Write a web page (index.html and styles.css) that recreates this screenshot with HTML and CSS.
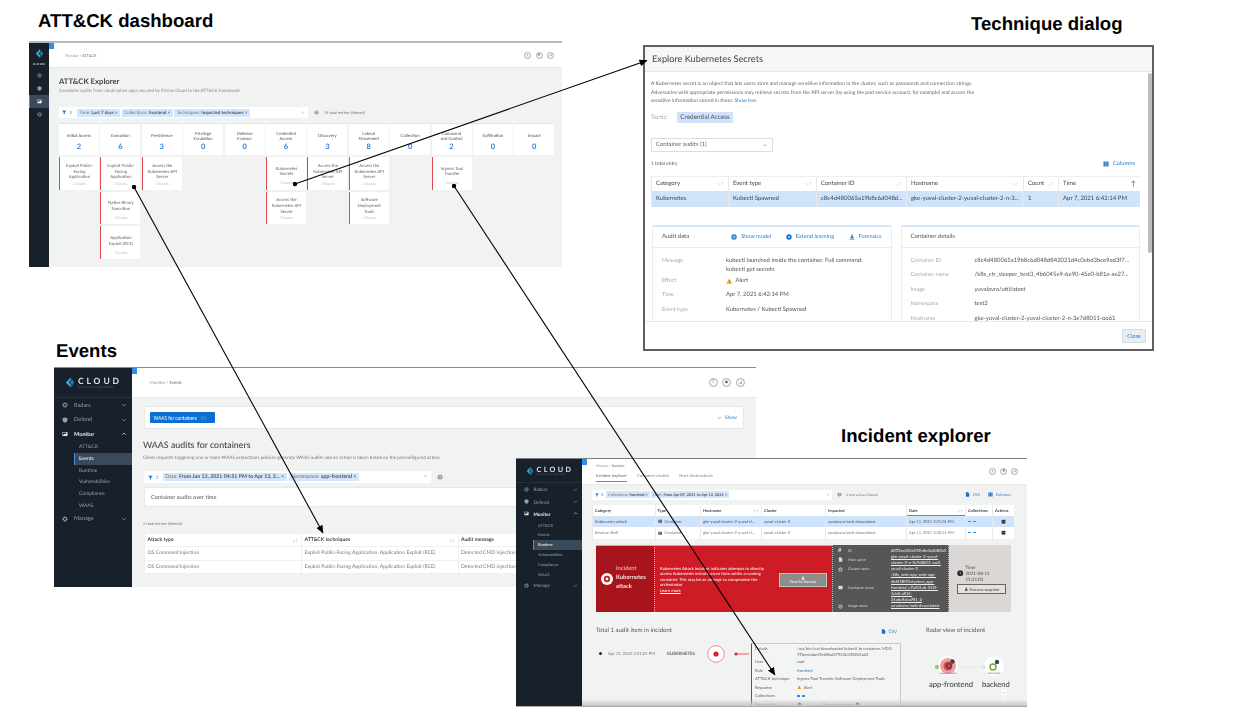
FILE: index.html
```html
<!DOCTYPE html>
<html lang="en">
<head>
  <meta charset="UTF-8" />
  <title>ATT&amp;CK explorer overview</title>
  <link rel="stylesheet" href="styles.css">
</head>
<body>

  <!-- icon set -->
  <svg class="icon-defs" aria-hidden="true">
    <symbol id="i-logo" viewBox="0 0 16 16"><path fill="#37b3d8" d="M9 0 1.5 8 9 16v-4.5L5.800 8 9 4.500z"/><path fill="#1f7fb0" d="M10 6 6.500 9.500H10V16l4.500-8L10 1z"/></symbol>
    <symbol id="i-radar" viewBox="0 0 12 12"><circle cx="6" cy="6" r="4" fill="none" stroke="currentColor" stroke-width="2"/><circle cx="6" cy="6" r="1.200" fill="currentColor"/></symbol>
    <symbol id="i-shield" viewBox="0 0 12 12"><path fill="currentColor" d="M6 .8l4.800 1.600v3.700c0 2.900-2.100 4.700-4.800 5.400-2.700-.7-4.800-2.500-4.800-5.400V2.400z"/></symbol>
    <symbol id="i-monitor" viewBox="0 0 12 12"><path fill="currentColor" d="M1 2h10v8H1zm2 5.500l2-2 1.500 1L9 4.200V3H2v4.500z"/></symbol>
    <symbol id="i-gear" viewBox="0 0 12 12"><circle cx="6" cy="6" r="3.200" fill="none" stroke="currentColor" stroke-width="2"/><circle cx="6" cy="6" r="4.800" fill="none" stroke="currentColor" stroke-width="1.400" stroke-dasharray="2 1.770"/></symbol>
    <symbol id="i-down" viewBox="0 0 12 12"><path fill="none" stroke="currentColor" stroke-width="1.400" d="M2.500 4.500 6 8l3.500-3.500"/></symbol>
    <symbol id="i-up" viewBox="0 0 12 12"><path fill="none" stroke="currentColor" stroke-width="1.400" d="M2.500 7.500 6 4l3.500 3.500"/></symbol>
    <symbol id="i-filter" viewBox="0 0 12 12"><path fill="currentColor" d="M.5 1.500h11L7.500 6.500V10l-3 1.500v-5z"/></symbol>
    <symbol id="i-help" viewBox="0 0 12 12"><circle cx="6" cy="6" r="5" fill="currentColor"/><path fill="none" stroke="#fff" stroke-width="1.200" d="M4.500 4.800C4.500 3 7.500 3 7.500 4.800 7.500 6 6 6 6 7.300M6 8.200v1"/></symbol>
    <symbol id="i-bell" viewBox="0 0 12 12"><path fill="currentColor" d="M6 1.500c2 0 2.800 1.500 2.800 3.500l1 2.500H2.200l1-2.500C3.200 3 4 1.500 6 1.500zM5 8.500h2v1H5z"/></symbol>
    <symbol id="i-bars" viewBox="0 0 12 12"><path fill="currentColor" d="M2 8h1.500v1.500H2zM5 6h1.500v3.500H5zM8 3h1.500v6.500H8z"/></symbol>
    <symbol id="i-columns" viewBox="0 0 12 12"><path fill="currentColor" d="M1 1h2.800v10H1zM4.600 1h2.800v10H4.600zM8.200 1H11v10H8.200z"/></symbol>
    <symbol id="i-csv" viewBox="0 0 12 12"><path fill="currentColor" d="M2 .5h5l3 3v8H2zM7 6h3.500v3H7z"/></symbol>
    <symbol id="i-model" viewBox="0 0 12 12"><circle cx="6" cy="6" r="5.400" fill="currentColor"/><circle cx="6" cy="6" r="2.400" fill="none" stroke="#fff" stroke-width="1.100"/></symbol>
    <symbol id="i-learn" viewBox="0 0 12 12"><circle cx="6" cy="6" r="5.400" fill="currentColor"/><path fill="none" stroke="#fff" stroke-width="1.100" d="M3.400 6h4.200M6 4l2 2-2 2"/></symbol>
    <symbol id="i-forensic" viewBox="0 0 12 12"><path fill="currentColor" d="M1 9.800h10V11H1zM5 1h2.500v4.500l1.500.5v3H3V6l2-.5z"/></symbol>
    <symbol id="i-warn" viewBox="0 0 12 12"><path fill="#f3b21b" d="M6 1l5.500 9.800H.5z"/><path fill="#5b4a12" d="M5.500 4.500h1v3.500h-1zM5.500 8.700h1v1h-1z"/></symbol>
    <symbol id="i-ring" viewBox="0 0 12 12"><circle cx="6" cy="6" r="6" fill="#fff"/><circle cx="6" cy="6" r="3.200" fill="#c3181f"/><circle cx="6" cy="6" r="1.400" fill="#fff"/></symbol>
    <symbol id="i-clock" viewBox="0 0 12 12"><circle cx="6" cy="6" r="5.500" fill="#2b2b2b"/><path fill="none" stroke="#ddd" stroke-width="1" d="M6 3v3.300l2 1.200"/></symbol>
    <symbol id="i-box" viewBox="0 0 12 12"><path fill="currentColor" d="M1 2h10v8H1z"/><path fill="#fff" opacity=".6" d="M2.500 4h7v1h-7zM2.500 6.500h7v1h-7z"/></symbol>
    <symbol id="i-trash" viewBox="0 0 12 12"><path fill="currentColor" d="M1.500 2h9v9h-9z"/><path fill="#888" d="M3 5h6v1H3z"/></symbol>
    <symbol id="i-robot" viewBox="0 0 12 12"><path fill="#444" d="M6 1a4.500 4.500 0 0 1 4.500 4.500V8h-9V5.500A4.500 4.500 0 0 1 6 1zM2.500 9h7v2h-7z"/></symbol>
  </svg>

  <h2 class="caption caption-dash">ATT&amp;CK dashboard</h2>
  <h2 class="caption caption-dialog">Technique dialog</h2>
  <h2 class="caption caption-events">Events</h2>
  <h2 class="caption caption-incident">Incident explorer</h2>

  <!-- ATT&CK dashboard -->
  <section class="shot shot-dash">
    <aside class="sidebar side-dash">
      <div class="brand">
        <svg class="brand-logo"><use href="#i-logo"/></svg>
        <span class="brand-name">CLOUD</span>
      </div>
      <ul class="nav">
        <li class="nav-item"><svg class="nav-icon"><use href="#i-radar"/></svg></li>
        <li class="nav-item"><svg class="nav-icon"><use href="#i-shield"/></svg></li>
        <li class="nav-item is-active"><svg class="nav-icon"><use href="#i-monitor"/></svg></li>
        <li class="nav-item"><svg class="nav-icon"><use href="#i-gear"/></svg></li>
      </ul>
    </aside>
    <div class="main">
      <span class="collapse-tab"></span>
      <header class="topbar">
        <div class="crumb">Monitor / <b>ATT&amp;CK</b></div>
        <div class="top-icons">
          <span class="round">?</span>
          <span class="round"><svg><use href="#i-bell"/></svg></span>
          <span class="round"><svg><use href="#i-bars"/></svg></span>
        </div>
      </header>
      <div class="dash-body">
        <h1 class="dash-title">ATT&amp;CK Explorer</h1>
        <p class="dash-sub">Correlates audits from cloud native apps secured by Prisma Cloud to the ATT&amp;CK framework</p>
        <div class="filter-row">
          <div class="filter-bar">
            <svg class="filter-icon"><use href="#i-filter"/></svg><span class="filter-count">3</span>
            <span class="chip">Time: <b>Last 7 days</b> <i>×</i></span>
            <span class="chip">Collections: <b>frontend</b> <i>×</i></span>
            <span class="chip">Techniques: <b>Impacted techniques</b> <i>×</i></span>
            <span class="filter-clear">×</span>
          </div>
          <svg class="help-icon"><use href="#i-help"/></svg>
          <span class="entries">19 total entries (filtered)</span>
        </div>
        <div class="matrix">
          <div class="tactic">
            <div class="tactic-head"><span>Initial Access</span><b>2</b></div>
            <div class="tech"><span>Exploit Public-<br>Facing<br>Application</span><small>2 Events</small></div>
          </div>
          <div class="tactic">
            <div class="tactic-head"><span>Execution</span><b>6</b></div>
            <div class="tech"><span>Exploit Public-<br>Facing<br>Application</span><small>2 Events</small></div>
            <div class="tech"><span>Native Binary<br>Execution</span><small>2 Events</small></div>
            <div class="tech"><span>Application<br>Exploit (RCE)</span><small>2 Events</small></div>
          </div>
          <div class="tactic">
            <div class="tactic-head"><span>Persistence</span><b>3</b></div>
            <div class="tech"><span>Access the<br>Kubernetes API<br>Server</span><small>3 Events</small></div>
          </div>
          <div class="tactic">
            <div class="tactic-head"><span>Privilege<br>Escalation</span><b>0</b></div>
          </div>
          <div class="tactic">
            <div class="tactic-head"><span>Defense<br>Evasion</span><b>0</b></div>
          </div>
          <div class="tactic">
            <div class="tactic-head"><span>Credential<br>Access</span><b>6</b></div>
            <div class="tech"><span>Kubernetes<br>Secrets</span><small>3 Events</small></div>
            <div class="tech"><span>Access the<br>Kubernetes API<br>Server</span><small>3 Events</small></div>
          </div>
          <div class="tactic">
            <div class="tactic-head"><span>Discovery</span><b>3</b></div>
            <div class="tech"><span>Access the<br>Kubernetes API<br>Server</span><small>3 Events</small></div>
          </div>
          <div class="tactic">
            <div class="tactic-head"><span>Lateral<br>Movement</span><b>8</b></div>
            <div class="tech"><span>Access the<br>Kubernetes API<br>Server</span><small>3 Events</small></div>
            <div class="tech"><span>Software<br>Deployment<br>Tools</span><small>5 Events</small></div>
          </div>
          <div class="tactic">
            <div class="tactic-head"><span>Collection</span><b>0</b></div>
          </div>
          <div class="tactic">
            <div class="tactic-head"><span>Command<br>and Control</span><b>2</b></div>
            <div class="tech"><span>Ingress Tool<br>Transfer</span><small>2 Events</small></div>
          </div>
          <div class="tactic">
            <div class="tactic-head"><span>Exfiltration</span><b>0</b></div>
          </div>
          <div class="tactic">
            <div class="tactic-head"><span>Impact</span><b>0</b></div>
          </div>
        </div>
      </div>
    </div>
  </section>

  <!-- technique dialog -->
  <section class="shot-dialog">
    <header class="dialog-head">Explore Kubernetes Secrets</header>
    <div class="dialog-body">
      <p class="dialog-text">A Kubernetes secret is an object that lets users store and manage sensitive information in the cluster, such as passwords and connection strings.<br>
        Adversaries with appropriate permissions may retrieve secrets from the API server (by using the pod service account, for example) and access the<br>
        sensitive information stored in them. <a>Show less</a></p>
      <div class="tactic-row"><span>Tactic:</span><b>Credential Access</b></div>
      <div class="select">Container audits (1)<svg><use href="#i-down"/></svg></div>
      <div class="total-row">
        <span>1 total entry</span>
        <a class="link-columns"><svg><use href="#i-columns"/></svg>Columns</a>
      </div>
      <div class="dialog-table">
        <div class="d-row d-head">
          <span>Category<em>↓↑</em></span><span>Event type<em>↓↑</em></span><span>Container ID<em>↓↑</em></span><span>Hostname<em>↓↑</em></span><span>Count<em>↓↑</em></span><span>Time<em class="sorted">↑</em></span>
        </div>
        <div class="d-row d-selected">
          <span>Kubernetes</span><span>Kubectl Spawned</span><span>c8c4d480065a19b8c6d048d...</span><span>gke-yuval-cluster-2-yuval-cluster-2-n-3...</span><span>1</span><span>Apr 7, 2021 6:42:14 PM</span>
        </div>
      </div>
      <div class="detail-cards">
        <article class="card">
          <header class="card-head">
            <span class="card-title">Audit data</span>
            <a class="card-link link-model"><svg><use href="#i-model"/></svg>Show model</a>
            <a class="card-link"><svg><use href="#i-learn"/></svg>Extend learning</a>
            <a class="card-link"><svg><use href="#i-forensic"/></svg>Forensics</a>
          </header>
          <dl class="facts facts-audit">
            <dt>Message</dt><dd class="tall">kubectl launched inside the container. Full command:<br>kubectl get secrets</dd>
            <dt>Effect</dt><dd><svg class="warn"><use href="#i-warn"/></svg>Alert</dd>
            <dt>Time</dt><dd>Apr 7, 2021 6:42:14 PM</dd>
            <dt>Event type</dt><dd>Kubernetes / Kubectl Spawned</dd>
          </dl>
        </article>
        <article class="card">
          <header class="card-head"><span class="card-title">Container details</span></header>
          <dl class="facts facts-container">
            <dt>Container ID</dt><dd>c8c4d480065a19b8c6d048d842021d4c0ebd3bce9ed3f7...</dd>
            <dt>Container name</dt><dd>/k8s_ctr_sleeper_test3_4b6045e9-6e90-45e0-b81a-ae27...</dd>
            <dt>Image</dt><dd>yuvalavra/util:latest</dd>
            <dt>Namespace</dt><dd>test3</dd>
            <dt>Hostname</dt><dd>gke-yuval-cluster-2-yuval-cluster-2-n-3e7d8051-oo61</dd>
          </dl>
        </article>
      </div>
      <div class="scrollbar"></div>
    </div>
    <footer class="dialog-foot"><button class="close-btn">Close</button></footer>
  </section>

  <!-- events -->
  <section class="shot shot-events">
    <aside class="sidebar side-events">
      <div class="brand">
        <svg class="brand-logo"><use href="#i-logo"/></svg>
        <div><span class="brand-name">CLOUD</span><small class="brand-by">BY PALO ALTO NETWORKS</small></div>
      </div>
      <ul class="nav">
        <li class="nav-item"><svg class="nav-icon"><use href="#i-radar"/></svg>Radars<svg class="nav-arrow"><use href="#i-down"/></svg></li>
        <li class="nav-item"><svg class="nav-icon"><use href="#i-shield"/></svg>Defend<svg class="nav-arrow"><use href="#i-down"/></svg></li>
        <li class="nav-item is-open"><svg class="nav-icon"><use href="#i-monitor"/></svg>Monitor<svg class="nav-arrow"><use href="#i-up"/></svg></li>
        <li class="nav-sub">ATT&amp;CK</li>
        <li class="nav-sub is-active">Events</li>
        <li class="nav-sub">Runtime</li>
        <li class="nav-sub">Vulnerabilities</li>
        <li class="nav-sub">Compliance</li>
        <li class="nav-sub">WAAS</li>
        <li class="nav-item"><svg class="nav-icon"><use href="#i-gear"/></svg>Manage<svg class="nav-arrow"><use href="#i-down"/></svg></li>
      </ul>
    </aside>
    <div class="main">
      <span class="collapse-tab"></span>
      <header class="topbar">
        <div class="crumb">Monitor / <b>Events</b></div>
        <div class="top-icons">
          <span class="round">?</span>
          <span class="round"><svg><use href="#i-bell"/></svg></span>
          <span class="round"><svg><use href="#i-bars"/></svg></span>
        </div>
      </header>
      <div class="events-body">
        <div class="waas-box">
          <button class="waas-btn">WAAS for containers<em>(0)</em></button>
          <a class="show-link"><svg><use href="#i-down"/></svg>Show</a>
        </div>
        <h1 class="events-title">WAAS audits for containers</h1>
        <p class="events-sub">Client requests triggering one or more WAAS protections policies generate WAAS audits and an action is taken based on the preconfigured action.</p>
        <div class="filter-row">
          <div class="filter-bar">
            <svg class="filter-icon"><use href="#i-filter"/></svg><span class="filter-count">2</span>
            <span class="chip">Date: <b>From Jan 13, 2021 04:51 PM to Apr 13, 2...</b> <i>×</i></span>
            <span class="chip">Namespace: <b>app-frontend</b> <i>×</i></span>
            <span class="filter-clear">×</span>
          </div>
          <svg class="help-icon"><use href="#i-help"/></svg>
        </div>
        <div class="chart-box">Container audits over time</div>
        <div class="entries">2 total entries (filtered)</div>
        <div class="events-table">
          <div class="e-row e-head"><span>Attack type<em>↓↑</em></span><span>ATT&amp;CK techniques<em>↓↑</em></span><span>Audit message</span></div>
          <div class="e-row"><span>OS Command Injection</span><span>Exploit Public-Facing Application, Application Exploit (RCE)</span><span>Detected CMD injection</span></div>
          <div class="e-row"><span>OS Command Injection</span><span>Exploit Public-Facing Application, Application Exploit (RCE)</span><span>Detected CMD injection</span></div>
        </div>
      </div>
    </div>
  </section>

  <!-- incident explorer -->
  <section class="shot shot-incident">
    <aside class="sidebar side-incident">
      <div class="brand">
        <svg class="brand-logo"><use href="#i-logo"/></svg>
        <div><span class="brand-name">CLOUD</span><small class="brand-by">BY PALO ALTO NETWORKS</small></div>
      </div>
      <ul class="nav">
        <li class="nav-item"><svg class="nav-icon"><use href="#i-radar"/></svg>Radars<svg class="nav-arrow"><use href="#i-down"/></svg></li>
        <li class="nav-item"><svg class="nav-icon"><use href="#i-shield"/></svg>Defend<svg class="nav-arrow"><use href="#i-down"/></svg></li>
        <li class="nav-item is-open"><svg class="nav-icon"><use href="#i-monitor"/></svg>Monitor<svg class="nav-arrow"><use href="#i-up"/></svg></li>
        <li class="nav-sub">ATT&amp;CK</li>
        <li class="nav-sub">Events</li>
        <li class="nav-sub is-active">Runtime</li>
        <li class="nav-sub">Vulnerabilities</li>
        <li class="nav-sub">Compliance</li>
        <li class="nav-sub">WAAS</li>
        <li class="nav-item"><svg class="nav-icon"><use href="#i-gear"/></svg>Manage<svg class="nav-arrow"><use href="#i-down"/></svg></li>
      </ul>
    </aside>
    <div class="main">
      <span class="collapse-tab"></span>
      <header class="topbar">
        <div>
          <div class="crumb">Monitor / <b>Runtime</b></div>
          <nav class="tabs">
            <span class="tab is-current">Incident explorer</span>
            <span class="tab">Container models</span>
            <span class="tab">Host observations</span>
          </nav>
        </div>
        <div class="top-icons">
          <span class="round">?</span>
          <span class="round"><svg><use href="#i-bell"/></svg></span>
          <span class="round"><svg><use href="#i-bars"/></svg></span>
        </div>
      </header>
      <div class="incident-body">
        <div class="filter-row">
          <div class="filter-bar">
            <svg class="filter-icon"><use href="#i-filter"/></svg><span class="filter-count">2</span>
            <span class="chip">Collections: <b>frontend</b> <i>×</i></span>
            <span class="chip">Date: <b>From Apr 09, 2021 to Apr 12, 2021</b> <i>×</i></span>
            <span class="filter-clear">×</span>
          </div>
          <svg class="help-icon"><use href="#i-help"/></svg>
          <span class="entries">2 total entries (filtered)</span>
          <a class="link-csv"><svg><use href="#i-csv"/></svg>CSV</a>
          <a class="link-columns"><svg><use href="#i-columns"/></svg>Columns</a>
        </div>
        <div class="incident-table">
          <div class="i-row i-head">
            <span>Category</span><span>Type</span><span>Hostname<em>↓↑</em></span><span>Cluster</span><span>Impacted</span><span class="i-sorted">Date<em>↓↑</em></span><span>Collections</span><span>Actions</span>
          </div>
          <div class="i-row i-selected">
            <span>Kubernetes attack</span><span><svg class="i-type"><use href="#i-box"/></svg>Container</span><span>gke-yuval-cluster-2-yuval-cl...</span><span>yuval-cluster-2</span><span>yuvalavra/web-dvwa:latest</span><span>Apr 11, 2021 3:31:01 PM</span><span class="dashes"><i></i><i></i></span><span><svg class="i-action"><use href="#i-trash"/></svg></span>
          </div>
          <div class="i-row">
            <span>Reverse Shell</span><span><svg class="i-type"><use href="#i-box"/></svg>Container</span><span>gke-yuval-cluster-2-yuval-cl...</span><span>yuval-cluster-2</span><span>yuvalavra/web-dvwa:latest</span><span>Apr 11, 2021 3:30:51 PM</span><span class="dashes"><i></i><i></i></span><span><svg class="i-action"><use href="#i-trash"/></svg></span>
          </div>
        </div>

        <div class="red-panel">
          <div class="red-name">
            <svg><use href="#i-ring"/></svg>
            <div>Incident<br><b>Kubernetes<br>attack</b></div>
          </div>
          <div class="red-info">
            <p>Kubernetes Attack incident indicates attempts to directly<br>access Kubernetes infrastructure from within a running<br>container. This may be an attempt to compromise the<br>orchestrator<br><u>Learn more</u></p>
            <button class="forensic-btn"><svg><use href="#i-forensic"/></svg>View live forensic</button>
          </div>
          <div class="red-facts">
            <div class="rf-row"><span class="rf-key"><b>#</b>ID</span><span class="rf-val">d872ec050e539c8e4e0082b3</span></div>
            <div class="rf-row"><span class="rf-key"><svg><use href="#i-csv"/></svg>Host name</span><span class="rf-val"><u>gke-yuval-cluster-2-yuval-<br>cluster-2-n-3e7d8051-sxd1</u></span></div>
            <div class="rf-row"><span class="rf-key"><svg><use href="#i-gear"/></svg>Cluster name</span><span class="rf-val">yuval-cluster-2</span></div>
            <div class="rf-row"><span class="rf-key"><svg><use href="#i-box"/></svg>Container name</span><span class="rf-val"><u>/k8s_web-app_web-app-<br>6bf458f55d-pdvrx_app-<br>frontend_c7a401ab-542f-<br>4cb8-a814-<br>24abc8cba781_0</u></span></div>
            <div class="rf-row"><span class="rf-key"><svg><use href="#i-radar"/></svg>Image name</span><span class="rf-val"><u>yuvalavra/web-dvwa:latest</u></span></div>
          </div>
          <div class="red-time">
            <div class="time-line"><svg><use href="#i-clock"/></svg><div>Time<br>2021-04-11<br>15:31:01</div></div>
            <button class="snapshot-btn"><svg><use href="#i-forensic"/></svg>Forensic snapshot</button>
          </div>
        </div>

        <div class="audit-area">
          <div class="audit-left">
            <div class="audit-heading">
              <h3>Total 1 audit item in incident</h3>
              <a class="link-csv"><svg><use href="#i-csv"/></svg>CSV</a>
            </div>
            <div class="audit-item">
              <div class="audit-when">
                <i class="black-dot"></i>
                <span class="when-date">Apr 11, 2021 3:31:01 PM</span>
                <span class="when-kind">KUBERNETES</span>
                <svg class="when-ring" viewBox="0 0 42 22">
                  <circle cx="9" cy="11" r="8.300" fill="#fff" stroke="#ef8d90" stroke-width="1"/>
                  <circle cx="9" cy="11" r="2.600" fill="#d8202b"/>
                  <circle cx="29" cy="11" r="1.500" fill="#d8202b"/>
                  <path d="M29 11h13" stroke="#d8202b" stroke-width=".7"/>
                </svg>
              </div>
              <div class="audit-box">
                <span class="first">Details</span><p class="first">/usr/bin/curl downloaded kubectl to container. MD5:<br>77beedabe49c08bd479240438203a04</p>
                <span>User</span><p>root</p>
                <span>Rule</span><p class="blue">frontend</p>
                <span>ATT&amp;CK technique</span><p>Ingress Tool Transfer, Software Deployment Tools</p>
                <span>Response</span><p><svg class="warn"><use href="#i-warn"/></svg>Alert</p>
                <span>Collections</span><p class="dashes"><i></i><i></i></p>
                <span>Show model</span><p class="model-row"><svg><use href="#i-robot"/></svg><em>Extend Learning</em><svg><use href="#i-robot"/></svg></p>
              </div>
            </div>
          </div>
          <div class="radar">
            <h3>Radar view of incident</h3>
            <div class="radar-map">
              <svg class="radar-svg" viewBox="0 0 88 58">
                <path d="M14 27h48" stroke="#ddd" stroke-width=".6"/>
                <circle cx="22" cy="26" r="10" fill="#fff"/>
                <circle cx="22" cy="26" r="8" fill="#f0a0a0"/>
                <circle cx="22" cy="26" r="4.500" fill="#d6454b"/>
                <circle cx="23" cy="26" r="2.400" fill="none" stroke="#333" stroke-width="1"/>
                <circle cx="26.500" cy="21.500" r="2.200" fill="#444"/>
                <circle cx="11" cy="27" r="2.200" fill="#9ccc65"/>
                <circle cx="68" cy="26" r="10" fill="#fff"/>
                <circle cx="67" cy="27" r="3" fill="none" stroke="#6aa62f" stroke-width="1.400"/>
                <circle cx="71" cy="22" r="2.200" fill="#444"/>
                <circle cx="58" cy="27" r="1.800" fill="#ddd"/>
                <text class="radar-tiny" x="22" y="33.500">web-dvwa:latest</text>
                <text class="radar-tiny" x="68" y="33.500">be-frontend</text>
              </svg>
              <span class="radar-name name-front">app-frontend</span>
              <span class="radar-name name-back">backend</span>
              <span class="zoom-btn zoom-in">+</span>
              <span class="zoom-btn zoom-out">−</span>
            </div>
          </div>
        </div>
      </div>
    </div>
  </section>

  <!-- arrows between the pictures -->
  <svg class="arrows" viewBox="0 0 1259 710">
    <defs>
      <marker id="arrow-head" markerUnits="userSpaceOnUse" markerWidth="8" markerHeight="7" refX="7.500" refY="3.500" orient="auto">
        <path d="M0 0 8 3.500 0 7z"/>
      </marker>
      <marker id="start-dot" markerUnits="userSpaceOnUse" markerWidth="5" markerHeight="5" refX="2.500" refY="2.500">
        <circle cx="2.500" cy="2.500" r="2.200"/>
      </marker>
    </defs>
    <path class="arrow" d="M295 184 647 60.500"/>
    <path class="arrow" d="M134 187 323 533"/>
    <path class="arrow" d="M454 186 775 675"/>
  </svg>

</body>
</html>
```

FILE: styles.css
```css
* {
  box-sizing: border-box;
}

html, body {
  margin: 0;
  padding: 0;
}

body {
  position: relative;
  width: 1259px;
  height: 710px;
  overflow: hidden;
  background: #fff;
  font-family: Lato, "Liberation Sans", sans-serif;
  color: #555;
  text-rendering: geometricPrecision;
}

h1, h2, h3, p, dl, dd, ul {
  margin: 0;
  padding: 0;
}

ul {
  list-style: none;
}

button {
  font-family: inherit;
  border: none;
  padding: 0;
}

em, i {
  font-style: normal;
}

.icon-defs {
  position: absolute;
  width: 0;
  height: 0;
}

/* headings over each picture */
.caption {
  position: absolute;
  font-family: "Liberation Sans", Arial, sans-serif;
  font-size: 18.600px;
  line-height: 22px;
  font-weight: bold;
  color: #000;
  white-space: nowrap;
}

.caption-dash { left: 38px; top: 10px; }
.caption-dialog { left: 971px; top: 13px; }
.caption-events { left: 56px; top: 340px; }
.caption-incident { left: 841px; top: 425px; }

/* the screenshot windows */
.shot {
  position: absolute;
  display: flex;
  overflow: hidden;
  background: #f1f3f3;
  filter: blur(.45px);
}

.shot-dash {
  left: 29px;
  top: 41px;
  width: 533px;
  height: 226px;
  border-top: 2px solid #b7b7b7;
}

.shot-events {
  left: 54px;
  top: 367px;
  width: 702px;
  height: 220px;
  border-top: 1px solid #8a8a8a;
}

.shot-incident {
  left: 516px;
  top: 458px;
  width: 511px;
  height: 248.500px;
  border-top: 1px solid #7d7d7d;
  border-bottom: 1px solid #a9a9a9;
}

.shot-incident::after {
  content: "";
  position: absolute;
  left: 66px;
  right: 0;
  bottom: 0;
  height: 7px;
  background: linear-gradient(to bottom, rgba(190, 190, 190, 0), #c4c4c4);
}

.main {
  position: relative;
  flex: 1;
  min-width: 0;
}

.collapse-tab {
  position: absolute;
  left: 0;
  top: 0;
  width: 5px;
  height: 6px;
  background: #2f8ee8;
}

/* sidebars */
.sidebar {
  flex: none;
  background: #17202b;
  color: #97a1ac;
}

.brand {
  display: flex;
  align-items: center;
  border-bottom: 1px solid #25303c;
}

.brand-name {
  display: block;
  color: #dfe4e8;
  font-weight: bold;
}

.brand-by {
  display: block;
  color: #5d6874;
  white-space: nowrap;
}

.nav-item, .nav-sub {
  display: flex;
  align-items: center;
  white-space: nowrap;
}

.nav-item.is-open {
  color: #e6e9ec;
  font-weight: bold;
}

.nav-sub.is-active, .nav-item.is-active {
  background: #3b4a5b;
  color: #fff;
  box-shadow: inset 1px 0 0 #3f93e6;
}

.nav-arrow {
  margin-left: auto;
}

.side-dash {
  width: 20px;
}

.side-dash .brand {
  flex-direction: column;
  height: 26px;
  padding-top: 5px;
  border: none;
}

.side-dash .brand-logo {
  width: 9px;
  height: 11px;
}

.side-dash .brand-name {
  font-size: 2.800px;
  letter-spacing: .5px;
  margin-top: 3px;
}

.side-dash .nav-item {
  height: 13px;
  justify-content: center;
}

.side-dash .nav-icon {
  width: 5px;
  height: 5px;
}

.side-events {
  width: 78px;
}

.side-events .brand {
  height: 30px;
  padding-left: 11px;
  gap: 3px;
}

.side-events .brand-logo {
  width: 10px;
  height: 13px;
}

.side-events .brand-name {
  font-size: 8.500px;
  line-height: 9px;
  letter-spacing: 2.900px;
}

.side-events .brand-by {
  font-size: 2.400px;
  letter-spacing: .3px;
}

.side-events .nav-item {
  height: 14.500px;
  padding: 0 5px 0 8px;
  font-size: 5.600px;
}

.side-events .nav-icon {
  width: 6px;
  height: 6px;
  margin-right: 6px;
}

.side-events .nav-arrow {
  width: 6px;
  height: 6px;
}

.side-events .nav-sub {
  height: 11.700px;
  padding-left: 25px;
  font-size: 5px;
}

.side-events .nav-sub.is-active {
  margin-left: 20px;
  padding-left: 5px;
}

.side-incident {
  width: 66px;
}

.side-incident .brand {
  height: 24px;
  padding-left: 10px;
  gap: 2.500px;
}

.side-incident .brand-logo {
  width: 8px;
  height: 10px;
}

.side-incident .brand-name {
  font-size: 7.200px;
  line-height: 8px;
  letter-spacing: 2.400px;
}

.side-incident .brand-by {
  font-size: 2px;
  letter-spacing: .2px;
}

.side-incident .nav-item {
  height: 12.400px;
  padding: 0 4px 0 8px;
  font-size: 4.700px;
}

.side-incident .nav-icon {
  width: 5px;
  height: 5px;
  margin-right: 4.500px;
}

.side-incident .nav-arrow {
  width: 5px;
  height: 5px;
}

.side-incident .nav-sub {
  height: 9.800px;
  padding-left: 22px;
  font-size: 4px;
}

.side-incident .nav-sub.is-active {
  margin-left: 17px;
  padding-left: 5px;
}

/* top bars */
.topbar {
  display: flex;
  justify-content: space-between;
  align-items: center;
  background: #fff;
  border-bottom: 1px solid #e9e9e9;
}

.crumb {
  color: #999;
}

.crumb b {
  color: #666;
  font-weight: normal;
}

.top-icons {
  display: flex;
}

.round {
  display: flex;
  align-items: center;
  justify-content: center;
  border: .5px solid #aaa;
  border-radius: 50%;
  background: #f7f7f7;
  color: #666;
}

.round svg {
  width: 70%;
  height: 70%;
}

.shot-dash .topbar {
  height: 25px;
  padding: 0 8px 0 16px;
}

.shot-dash .crumb {
  font-size: 3.800px;
}

.shot-dash .top-icons {
  gap: 4.500px;
}

.shot-dash .round {
  width: 7px;
  height: 7px;
  font-size: 4px;
}

.shot-events .topbar {
  height: 29.500px;
  padding: 0 11.500px 0 18px;
}

.shot-events .crumb {
  font-size: 4.300px;
}

.shot-events .top-icons {
  gap: 4.500px;
}

.shot-events .round {
  width: 9px;
  height: 9px;
  font-size: 5px;
}

.shot-incident .topbar {
  height: 26px;
  padding: 0 9px 0 14px;
  align-items: flex-start;
}

.shot-incident .crumb {
  font-size: 3.500px;
  line-height: 5px;
  margin-top: 5px;
}

.shot-incident .top-icons {
  gap: 4px;
  margin-top: 8.500px;
}

.shot-incident .round {
  width: 7px;
  height: 7px;
  font-size: 4px;
}

.tabs {
  display: flex;
  gap: 10px;
  margin-top: 3px;
}

.tab {
  height: 10px;
  font-size: 4.200px;
  line-height: 8px;
  color: #888;
}

.tab.is-current {
  color: #666;
  border-bottom: 1px solid #3f93e6;
}

/* filter bars */
.filter-row {
  display: flex;
  align-items: center;
}

.filter-bar {
  display: flex;
  align-items: center;
  background: #fff;
  white-space: nowrap;
}

.filter-icon {
  color: #1d7ad2;
  flex: none;
}

.filter-count {
  color: #1d7ad2;
}

.chip {
  background: #d4e6fb;
  color: #777;
  white-space: nowrap;
}

.chip b {
  color: #555;
}

.chip i {
  color: #1d6fcb;
  font-weight: bold;
}

.filter-clear {
  margin-left: auto;
  color: #aaa;
}

.help-icon {
  color: #9a9a9a;
  flex: none;
}

.entries {
  color: #777;
  white-space: nowrap;
}

/* dashboard */
.dash-body {
  padding: 8px 0 0 10px;
}

.dash-title {
  font-size: 7.700px;
  line-height: 10px;
  font-weight: bold;
  color: #444;
}

.dash-sub {
  font-size: 4.470px;
  line-height: 6px;
  margin-top: 2px;
  color: #888;
  white-space: nowrap;
}

.shot-dash .filter-row {
  margin-top: 13px;
}

.shot-dash .filter-bar {
  width: 249px;
  height: 11px;
  padding: 0 4px 0 3px;
  font-size: 4.550px;
}

.shot-dash .filter-icon {
  width: 4.500px;
  height: 4.500px;
}

.shot-dash .filter-count {
  margin: 0 5px 0 3px;
  font-size: 4px;
}

.shot-dash .chip {
  padding: 1.500px 2.500px;
  margin-right: 1.500px;
}

.shot-dash .help-icon {
  width: 5px;
  height: 5px;
  margin: 0 5px 0 6px;
}

.shot-dash .entries {
  font-size: 3.850px;
}

.matrix {
  display: flex;
  gap: 1.400px;
  margin-top: 5px;
}

.tactic {
  flex: none;
  width: 40px;
}

.tactic-head {
  display: flex;
  flex-direction: column;
  align-items: center;
  height: 32px;
  padding-top: 5px;
  background: #fff;
  border-top: 1px solid #d8e8fa;
  border-radius: 1px;
  margin-bottom: 2px;
  font-size: 4.300px;
  line-height: 5.300px;
  color: #555;
  text-align: center;
}

.tactic-head span {
  display: flex;
  align-items: center;
  height: 14px;
}

.tactic-head b {
  font-size: 7.500px;
  line-height: 10px;
  margin-top: -1px;
  color: #2d84dc;
}

.tech {
  display: flex;
  flex-direction: column;
  align-items: center;
  height: 32.700px;
  padding-top: 5.800px;
  margin-bottom: 2px;
  background: #fff;
  border-left: 1.300px solid #e04a4e;
  font-size: 4.300px;
  line-height: 5.700px;
  color: #666;
  text-align: center;
}

.tech span {
  display: flex;
  align-items: center;
  min-height: 17px;
}

.tech small {
  font-size: 3.400px;
  line-height: 5px;
  margin-top: 1.700px;
  color: #b5b5b5;
}

/* technique dialog */
.shot-dialog {
  position: absolute;
  left: 643px;
  top: 45px;
  width: 511px;
  height: 306px;
  display: flex;
  flex-direction: column;
  border: 2px solid #606060;
  background: #fff;
  filter: blur(.35px);
}

.dialog-head {
  flex: none;
  height: 25px;
  padding-left: 7px;
  background: #f6f6f6;
  border-bottom: 1px solid #e6e6e6;
  font-size: 9.200px;
  line-height: 24px;
  color: #444;
}

.dialog-body {
  position: relative;
  flex: 1;
  overflow: hidden;
  padding: 8px 0 0 6px;
}

.dialog-text {
  font-size: 5.120px;
  line-height: 8.500px;
  color: #666;
  white-space: nowrap;
}

.dialog-text a {
  color: #2d7fd6;
}

.tactic-row {
  display: flex;
  align-items: center;
  height: 11px;
  margin-top: 6.500px;
  font-size: 6px;
  color: #aaa;
}

.tactic-row b {
  margin-left: 9.500px;
  padding: 0 3px;
  background: #cfe3fa;
  font-weight: normal;
  font-size: 6.400px;
  line-height: 11px;
  color: #555;
}

.select {
  display: flex;
  align-items: center;
  justify-content: space-between;
  width: 122px;
  height: 13.500px;
  margin-top: 15px;
  padding: 0 4px;
  border: .7px solid #ddd;
  font-size: 5.900px;
  color: #666;
}

.select svg {
  width: 6px;
  height: 6px;
  color: #999;
}

.total-row {
  display: flex;
  justify-content: space-between;
  align-items: center;
  width: 489px;
  height: 8px;
  margin-top: 8px;
  font-size: 4.900px;
}

.link-columns, .link-csv {
  display: flex;
  align-items: center;
  color: #2d7fd6;
  white-space: nowrap;
}

.total-row .link-columns {
  font-size: 5.800px;
  margin-right: 5px;
}

.total-row .link-columns svg {
  width: 6px;
  height: 6px;
  margin-right: 4px;
  color: #1d6fcb;
}

.dialog-table {
  width: 489px;
  margin-top: 8px;
}

.d-row {
  display: grid;
  grid-template-columns: 77px 88px 90px 117px 35px 82px;
  font-size: 6px;
  white-space: nowrap;
}

.d-row span {
  display: flex;
  align-items: center;
  justify-content: space-between;
  padding: 0 4px;
  overflow: hidden;
  border-left: .5px solid #e8e8e8;
}

.d-row em, .e-row em, .i-row em {
  color: #c2c2c2;
  font-size: 3.600px;
}

.d-row em.sorted {
  color: #2d8ae6;
  font-size: 7px;
  font-weight: bold;
}

.d-head {
  height: 15px;
  color: #444;
  background: #fff;
  border-top: .5px solid #eee;
}

.d-selected {
  height: 16px;
  background: #cfe3fa;
  color: #444;
}

.detail-cards {
  display: flex;
  gap: 9px;
  margin: 18px 0 0 1px;
}

.card {
  flex: none;
  width: 239.500px;
  height: 150px;
  border: .7px solid #ececec;
  border-top: 2px solid #d3e5fa;
  border-radius: 2px 2px 0 0;
}

.card-head {
  display: flex;
  align-items: center;
  height: 21px;
  padding: 0 9px;
  border-bottom: .7px solid #ececec;
  font-size: 5.600px;
}

.card-title {
  font-size: 6px;
  color: #555;
}

.card-link {
  display: flex;
  align-items: center;
  margin-left: 14.500px;
  color: #2d7fd6;
  white-space: nowrap;
}

.link-model {
  margin-left: auto;
}

.card-link svg {
  width: 6px;
  height: 6px;
  margin-right: 4px;
  color: #1d6fcb;
}

.facts {
  display: grid;
  column-gap: 0;
  row-gap: 5.900px;
  padding: 9.500px 9px 0;
  font-size: 5.500px;
  line-height: 8.500px;
  white-space: nowrap;
}

.facts dt {
  color: #aaa;
}

.facts dd {
  display: flex;
  align-items: center;
  font-size: 5.900px;
  color: #555;
}

.facts-audit {
  grid-template-columns: 64px 1fr;
}

.facts-audit dd.tall {
  display: block;
  margin-bottom: -3px;
}

.facts-container {
  grid-template-columns: 64px 1fr;
}

.warn {
  width: 6.500px;
  height: 6.500px;
  margin-right: 3px;
}

.scrollbar {
  position: absolute;
  right: 0;
  top: 1px;
  width: 4px;
  height: 180px;
  border-radius: 2px;
  background: #bdbdbd;
}

.dialog-foot {
  flex: none;
  display: flex;
  justify-content: flex-end;
  align-items: center;
  height: 28px;
  padding-right: 6px;
  border-top: .7px solid #e8e8e8;
  background: #fff;
}

.close-btn {
  width: 24px;
  height: 14px;
  background: #e9eef1;
  border: .5px solid #d5dadd;
  border-radius: 1px;
  font-size: 5.500px;
  color: #2d7fd6;
}

/* events */
.events-body {
  padding: 8.500px 12px 0;
}

.waas-box {
  display: flex;
  align-items: center;
  justify-content: space-between;
  height: 23px;
  padding: 0 6px 0 5px;
  background: #fff;
  border: .5px solid #e8e8e8;
}

.waas-btn {
  width: 65px;
  height: 11px;
  background: #0a6fd0;
  border-radius: 1px;
  font-size: 4.700px;
  color: #fff;
  text-align: left;
  padding-left: 3.500px;
}

.waas-btn em {
  margin-left: 4px;
  color: #5b9bdc;
}

.show-link {
  display: flex;
  align-items: center;
  gap: 3px;
  font-size: 5px;
  color: #2d7fd6;
}

.show-link svg {
  width: 5px;
  height: 5px;
}

.events-title {
  font-size: 8.850px;
  line-height: 12px;
  font-weight: 500;
  color: #444;
  margin: 10px 0 0 -1px;
}

.events-sub {
  font-size: 4.680px;
  line-height: 7px;
  margin: 2.500px 0 0 -1px;
  color: #777;
  white-space: nowrap;
}

.shot-events .filter-row {
  margin-top: 10.500px;
}

.shot-events .filter-bar {
  width: 287px;
  height: 12px;
  padding: 0 4px 0 4px;
  font-size: 5.300px;
}

.shot-events .filter-icon {
  width: 5px;
  height: 5px;
}

.shot-events .filter-count {
  margin: 0 4px 0 3px;
  font-size: 4.500px;
}

.shot-events .chip {
  padding: 1.200px 2.500px;
  margin-right: 2px;
}

.shot-events .help-icon {
  width: 6px;
  height: 6px;
  margin-left: 6px;
}

.chart-box {
  height: 20px;
  margin-top: 4px;
  padding-left: 6px;
  background: #fff;
  border: .5px solid #e8e8e8;
  font-size: 5.650px;
  line-height: 20px;
  color: #555;
}

.shot-events .entries {
  font-size: 3.900px;
  line-height: 6px;
  margin: 13.500px 0 0 -1px;
}

.events-table {
  margin-top: 7.500px;
}

.e-row {
  display: grid;
  grid-template-columns: 157px 156.500px 1fr;
  height: 13.300px;
  background: #fff;
  border-bottom: .5px solid #f0f0f0;
  font-size: 5.100px;
  line-height: 13px;
  color: #777;
  white-space: nowrap;
}

.e-row span {
  display: flex;
  justify-content: space-between;
  padding: 0 3px 0 2.500px;
  border-left: .5px solid #eeeeee;
  overflow: hidden;
}

.e-head {
  color: #444;
  font-weight: bold;
}

/* incident */
.incident-body {
  padding: 4.500px 0 0 10px;
}

.shot-incident .filter-bar {
  width: 240px;
  height: 10.500px;
  padding: 0 3px;
  font-size: 3.900px;
}

.shot-incident .filter-icon {
  width: 4px;
  height: 4px;
}

.shot-incident .filter-count {
  margin: 0 3px 0 2px;
  font-size: 4px;
}

.shot-incident .chip {
  padding: 1px 2px;
  margin-right: 1.500px;
}

.shot-incident .help-icon {
  width: 5px;
  height: 5px;
  margin: 0 4px 0 5px;
}

.shot-incident .entries {
  font-size: 3.200px;
}

.shot-incident .filter-row .link-csv {
  margin-left: auto;
  font-size: 4px;
}

.shot-incident .link-csv svg, .shot-incident .link-columns svg {
  width: 5px;
  height: 5px;
  margin-right: 2.500px;
  color: #1d6fcb;
}

.shot-incident .filter-row .link-columns {
  margin: 0 16px 0 8px;
  font-size: 4px;
}

.incident-table {
  width: 422px;
  margin-top: 5px;
}

.i-row {
  display: grid;
  grid-template-columns: 62.500px 45.500px 61px 64px 81px 59px 27px 22px;
  height: 11.500px;
  background: #fff;
  font-size: 4px;
  line-height: 11px;
  color: #777;
  white-space: nowrap;
}

.i-row span {
  display: flex;
  align-items: center;
  padding: 0 2px;
  overflow: hidden;
  border-left: .5px solid #eaeaea;
}

.i-head {
  height: 10.500px;
  color: #444;
  font-weight: bold;
}

.i-head em {
  margin-left: auto;
}

.i-head .i-sorted {
  box-shadow: inset 0 -1px 0 #3f93e6;
}

.i-selected {
  background: #cfe3fa;
  color: #555;
}

.i-type {
  width: 4.500px;
  height: 4.500px;
  margin-right: 2.500px;
  color: #555;
}

.i-action {
  width: 5px;
  height: 5px;
  margin: 0 auto;
  color: #333;
}

.dashes i {
  display: inline-block;
  width: 3px;
  height: 1.300px;
  background: #2d8ae6;
  margin-right: 2px;
}

.red-panel {
  display: flex;
  width: 415px;
  height: 67px;
  margin: 6px 0 0 4px;
  color: #fff;
}

.red-name {
  flex: none;
  display: flex;
  align-items: center;
  gap: 3px;
  width: 58px;
  padding-left: 5px;
  background: #a7141c;
  border-top: .7px solid #ec9ea1;
  font-size: 5.800px;
  line-height: 8.700px;
  color: #eccaca;
}

.red-name svg {
  flex: none;
  width: 12px;
  height: 12px;
}

.red-name b {
  font-weight: bold;
  color: #f7e3e3;
}

.red-info {
  flex: none;
  position: relative;
  width: 178px;
  padding: 20.500px 0 0 5px;
  background: #cd1c25;
  border-left: 1px dotted #f2b3b3;
  border-top: .7px solid #ec9ea1;
  font-size: 4.200px;
  line-height: 5.400px;
  white-space: nowrap;
}

.forensic-btn {
  position: absolute;
  left: 124px;
  top: 27px;
  display: flex;
  flex-direction: column;
  align-items: center;
  justify-content: center;
  width: 48px;
  height: 14px;
  background: #8d8d8d;
  border: .7px solid #c3c3c3;
  font-size: 3.500px;
  color: #fff;
}

.forensic-btn svg {
  width: 4px;
  height: 4px;
}

.red-facts {
  flex: none;
  width: 117px;
  padding: 3px 0 0 5px;
  background: #565656;
  border-left: 1px dotted #bbb;
  border-right: 1px dotted #bbb;
  font-size: 3.700px;
  line-height: 6.200px;
}

.rf-row {
  display: flex;
  align-items: center;
}

.rf-key {
  flex: none;
  display: flex;
  align-items: center;
  width: 53px;
  color: #d8d8d8;
  white-space: nowrap;
}

.rf-key b, .rf-key svg {
  flex: none;
  width: 5px;
  height: 5px;
  margin-right: 5px;
  font-size: 6px;
  line-height: 5px;
}

.rf-val {
  font-size: 4.100px;
  white-space: nowrap;
  color: #eee;
}

.red-time {
  flex: 1;
  display: flex;
  flex-direction: column;
  padding: 20px 0 0 8px;
  background: #dbd7d5;
  font-size: 4.500px;
  line-height: 6px;
  color: #444;
}

.time-line {
  display: flex;
  align-items: center;
  gap: 2px;
}

.time-line svg {
  width: 6.500px;
  height: 6.500px;
}

.snapshot-btn {
  display: flex;
  align-items: center;
  justify-content: center;
  gap: 1.500px;
  width: 49px;
  height: 10px;
  margin-top: 1.500px;
  background: #e4e1df;
  border: .7px solid #666;
  font-size: 3.800px;
  color: #444;
  white-space: nowrap;
}

.snapshot-btn svg {
  width: 4.500px;
  height: 4.500px;
}

.audit-area {
  display: flex;
  margin: 15.500px 0 0 4px;
}

.audit-left {
  flex: none;
  width: 305px;
}

.audit-heading {
  display: flex;
  align-items: center;
  justify-content: space-between;
  height: 8px;
  padding-right: 4px;
}

.audit-heading h3, .radar h3 {
  font-size: 6.100px;
  line-height: 8px;
  font-weight: normal;
  color: #555;
  white-space: nowrap;
}

.audit-heading .link-csv {
  font-size: 4.500px;
}

.audit-item {
  display: flex;
  margin-top: 7.500px;
}

.audit-when {
  flex: none;
  display: flex;
  align-items: center;
  width: 155px;
  height: 22px;
  white-space: nowrap;
}

.black-dot {
  width: 3px;
  height: 3px;
  margin: 0 6.500px 0 2.500px;
  border-radius: 50%;
  background: #222;
  flex: none;
}

.when-date {
  width: 59px;
  font-size: 4.200px;
  color: #777;
}

.when-kind {
  width: 40px;
  font-size: 4.400px;
  font-weight: bold;
  color: #666;
}

.when-ring {
  flex: none;
  width: 42px;
  height: 22px;
}

.audit-box {
  display: grid;
  grid-template-columns: 42px 1fr;
  align-content: start;
  row-gap: 2.800px;
  width: 150px;
  height: 72px;
  padding: 2.500px 0 0 3px;
  border: .7px solid #c9c9c9;
  border-left: 1.200px solid #d8202b;
  background: #f3f4f4;
  font-size: 4.100px;
  line-height: 5.700px;
  color: #666;
  white-space: nowrap;
}

.audit-box p {
  display: flex;
  align-items: center;
  flex-wrap: wrap;
}

.audit-box .first {
  display: block;
  margin-bottom: -1px;
}

.audit-box p.blue {
  color: #2d7fd6;
}

.audit-box .warn {
  width: 4.500px;
  height: 4.500px;
  margin-right: 2px;
}

.model-row svg {
  width: 5px;
  height: 5px;
}

.model-row em {
  margin: 0 3px 0 21px;
}

.radar {
  margin-left: 25px;
}

.radar-map {
  position: relative;
  width: 87px;
  height: 66px;
  margin-top: 7px;
  background-image: radial-gradient(#dcdfdf .4px, transparent .5px);
  background-size: 3.500px 3.500px;
}

.radar-svg {
  position: absolute;
  left: 0;
  top: -2px;
  width: 88px;
  height: 58px;
}

.radar-tiny {
  font-size: 2.300px;
  fill: #555;
  text-anchor: middle;
}

.radar-name {
  position: absolute;
  top: 37px;
  font-size: 7.600px;
  line-height: 10px;
  color: #333;
  white-space: nowrap;
}

.name-front { left: 3px; }
.name-back { left: 56px; }

.zoom-btn {
  position: absolute;
  left: 76px;
  width: 4px;
  height: 5px;
  background: #fff;
  font-size: 4px;
  line-height: 5px;
  text-align: center;
  color: #2d7fd6;
}

.zoom-in { top: 48px; }
.zoom-out { top: 58px; }

/* arrows on top of everything */
.arrows {
  position: absolute;
  left: 0;
  top: 0;
  width: 1259px;
  height: 710px;
  pointer-events: none;
}

.arrow {
  fill: none;
  stroke: #000;
  stroke-width: 1.100px;
  marker-start: url(#start-dot);
  marker-end: url(#arrow-head);
}
```
